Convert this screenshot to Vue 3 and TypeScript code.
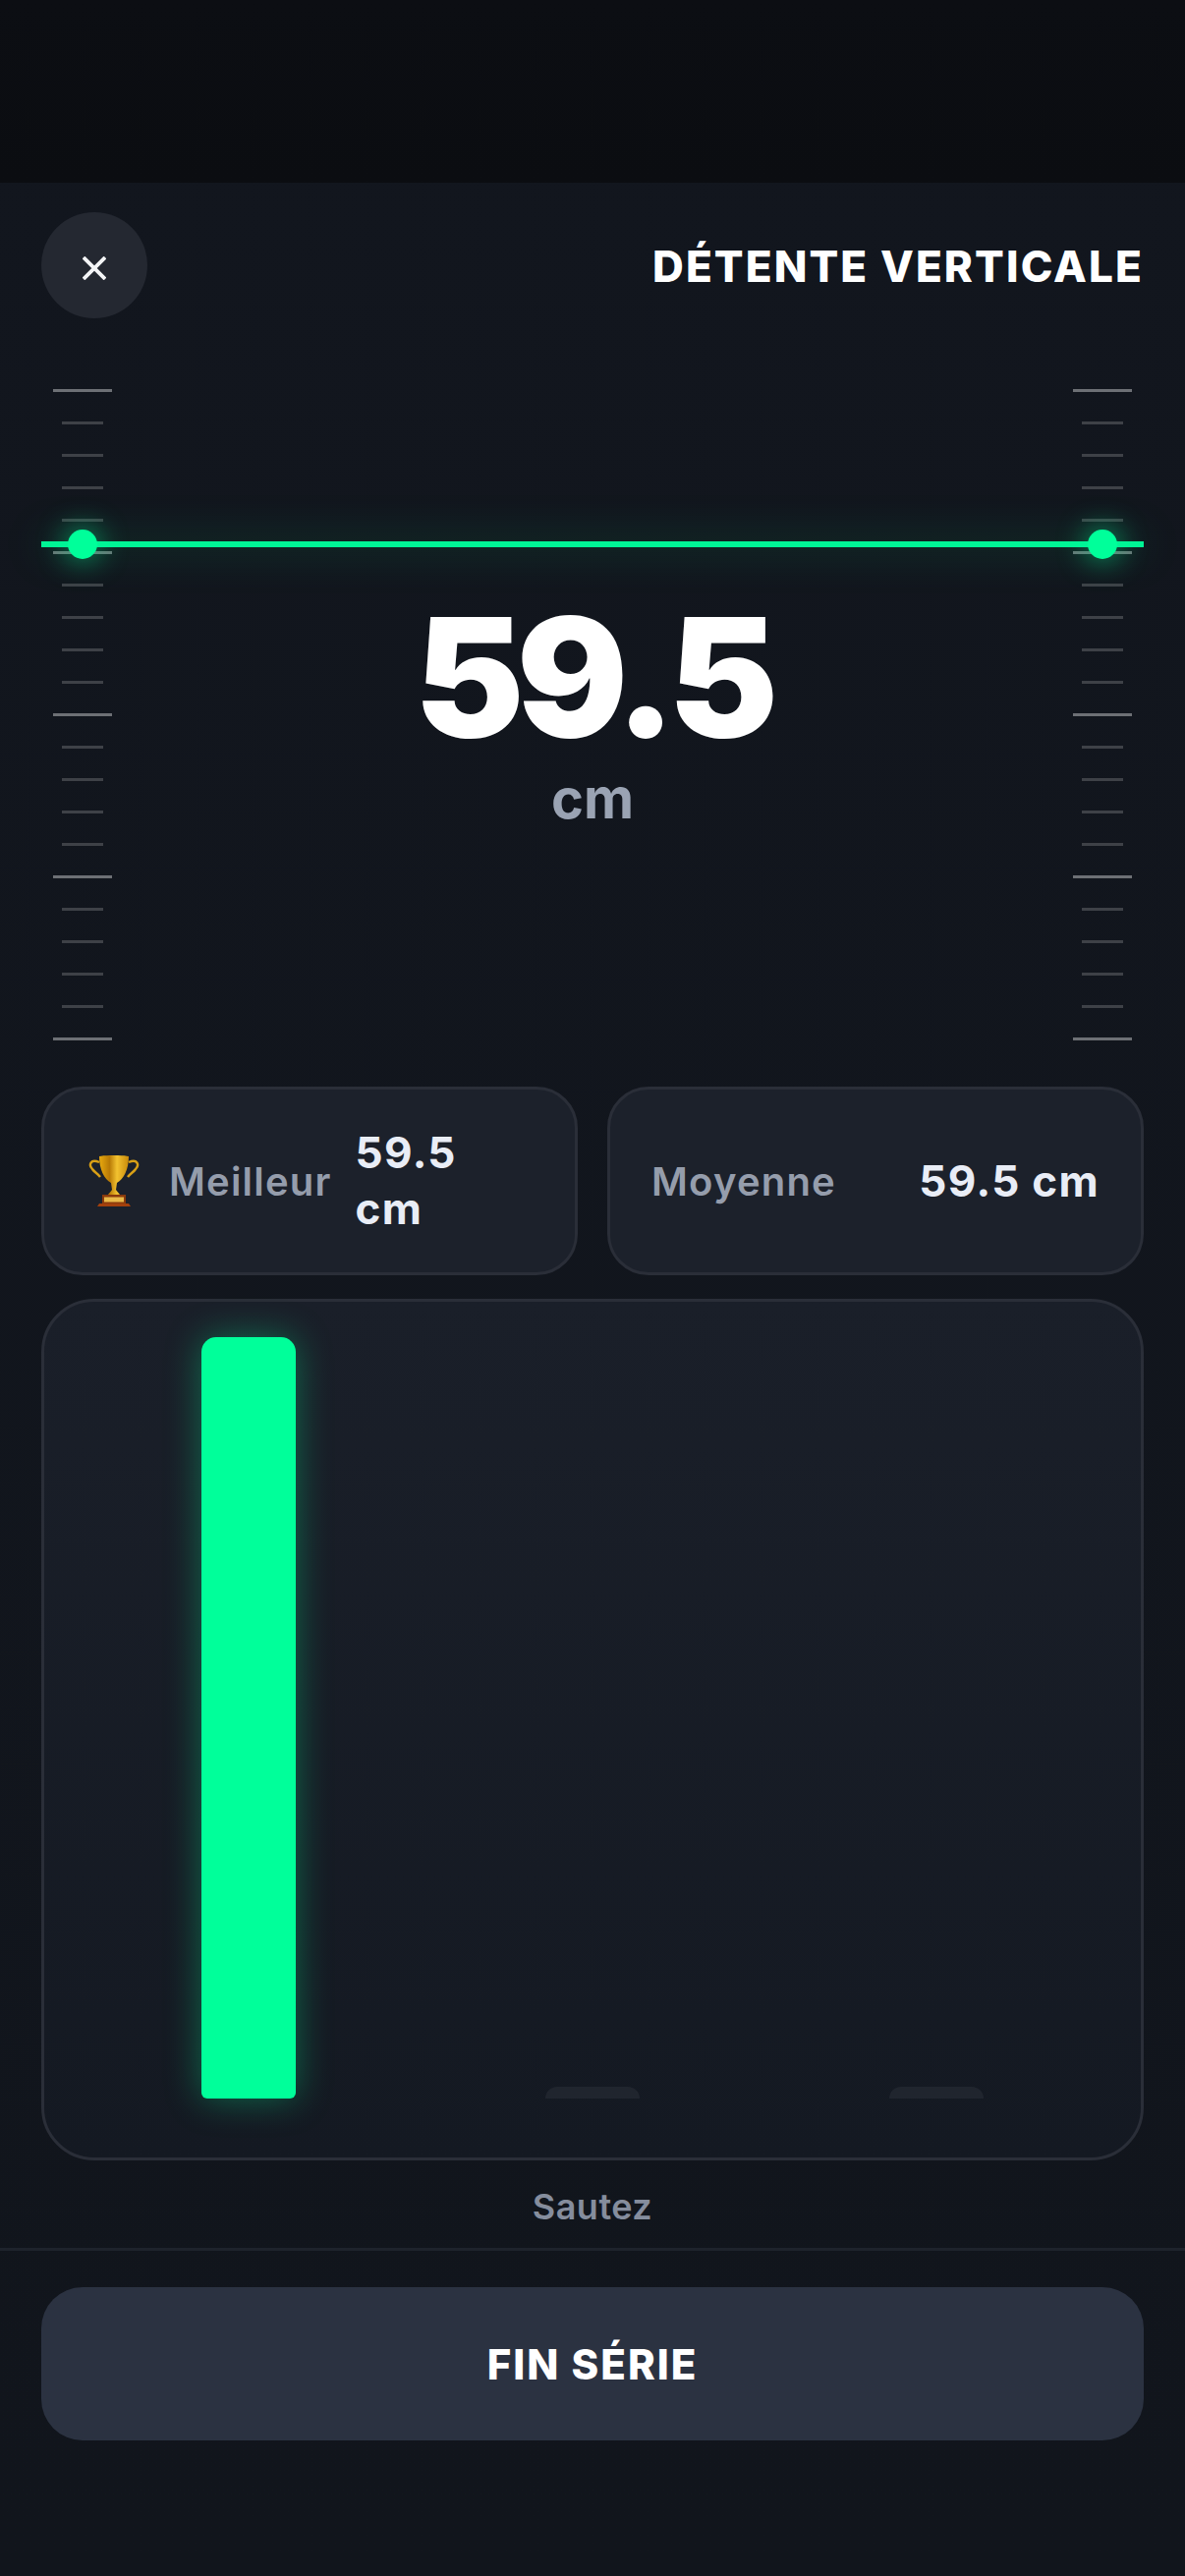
<template>
  <div class="screen">
    <div class="status-area"></div>

    <header class="top-bar">
      <button class="close-btn" aria-label="Fermer">
        <svg width="24" height="24" viewBox="0 0 24 24">
          <path d="M1 1 L23 23 M23 1 L1 23" stroke="#f4f5f7" stroke-width="3.8" fill="none" />
        </svg>
      </button>
      <h1 class="title">DÉTENTE VERTICALE</h1>
    </header>

    <section class="gauge">
      <div class="ticks">
        <span v-for="t in ticks" :key="t" class="tick" :class="{ major: t % 5 === 0 }"></span>
      </div>
      <div class="reading">
        <div class="reading-value">59.5</div>
        <div class="reading-unit">cm</div>
      </div>
      <div class="ticks">
        <span v-for="t in ticks" :key="t" class="tick" :class="{ major: t % 5 === 0 }"></span>
      </div>

      <div class="laser">
        <span class="dot"></span>
        <span class="dot"></span>
      </div>
    </section>

    <section class="stats">
      <div class="stat-card">
        <svg class="trophy" width="52" height="52" viewBox="0 0 52 52">
          <defs>
            <linearGradient id="gold" x1="0" y1="0" x2="1" y2="0">
              <stop offset="0" stop-color="#e8a90f" />
              <stop offset="0.35" stop-color="#b87a06" />
              <stop offset="0.6" stop-color="#f2c230" />
              <stop offset="1" stop-color="#c98a0a" />
            </linearGradient>
          </defs>
          <path d="M11 7 C2 3 0 10 4 14 C6 17 10 19 12 22" fill="none" stroke="#d9a016" stroke-width="2.4" />
          <path d="M41 7 C50 3 52 10 48 14 C46 17 42 19 40 22" fill="none" stroke="#d9a016" stroke-width="2.4" />
          <path d="M11 1 C16 -0.4 36 -0.4 41 1 C41 14 36 24 29 28 L28 35 C29 37 31 38 32 40 L20 40 C21 38 23 37 24 35 L23 28 C16 24 11 14 11 1 Z" fill="url(#gold)" />
          <rect x="14" y="40" width="24" height="9" fill="#8a3a0c" />
          <rect x="16" y="42.500" width="20" height="5" fill="#e9b949" />
          <path d="M11 49 H41 L43 52 H9 Z" fill="#a3400c" />
        </svg>
        <span class="stat-label">Meilleur</span>
        <span class="stat-value">59.5 cm</span>
      </div>
      <div class="stat-card spread">
        <span class="stat-label">Moyenne</span>
        <span class="stat-value">59.5 cm</span>
      </div>
    </section>

    <section class="chart">
      <div
        v-for="(bar, i) in bars"
        :key="i"
        class="bar"
        :class="{ active: bar.active }"
        :style="{ height: bar.height + 'px' }"
      ></div>
    </section>

    <p class="hint">Sautez</p>

    <footer class="footer">
      <button class="finish-btn">FIN SÉRIE</button>
    </footer>
  </div>
</template>

<script setup lang="ts">
const ticks: number[] = Array.from({ length: 21 }, (_, i) => i)

const bars = [
  { height: 775, active: true },
  { height: 12, active: false },
  { height: 12, active: false },
]
</script>

<style scoped>
.screen {
  width: 1206px;
  height: 2622px;
  display: flex;
  flex-direction: column;
  background: linear-gradient(180deg, #12161e 0%, #11151c 100%);
  font-family: Inter, "Liberation Sans", sans-serif;
  color: #fff;
  overflow: hidden;
}

.status-area {
  height: 186px;
  flex-shrink: 0;
  background: linear-gradient(180deg, #0c0e13, #0b0d11);
}

.top-bar {
  display: flex;
  justify-content: space-between;
  align-items: center;
  padding: 30px 42px 0;
}

.close-btn {
  width: 108px;
  height: 108px;
  border: none;
  border-radius: 50%;
  background: #242831;
  display: flex;
  align-items: center;
  justify-content: center;
  padding: 6px 0 0;
}

.title {
  margin: 2px 0 0;
  font-size: 44px;
  font-weight: 800;
  letter-spacing: 2.1px;
  line-height: 1;
}

.gauge {
  position: relative;
  display: flex;
  justify-content: space-between;
  margin: 72px 42px 0;
  padding: 0 12px;
}

.ticks {
  width: 60px;
  height: 663px;
  display: flex;
  flex-direction: column;
  justify-content: space-between;
  align-items: center;
}

.tick {
  display: block;
  width: 42px;
  height: 3px;
  background: #3e4147;
}

.tick.major {
  width: 60px;
  background: #6d7075;
}

.reading {
  padding-top: 204px;
  text-align: center;
}

.reading-value {
  font-size: 168px;
  font-weight: 900;
  line-height: 179px;
  letter-spacing: -8px;
}

.reading-unit {
  font-size: 56px;
  font-weight: 700;
  line-height: 68px;
  color: #9aa3b3;
}

.laser {
  position: absolute;
  left: 0;
  right: 0;
  top: 155px;
  height: 6px;
  background: #00f596;
  box-shadow: 0 0 44px rgba(0, 255, 154, 0.4);
  display: flex;
  justify-content: space-between;
  align-items: center;
  padding: 0 27px;
}

.dot {
  width: 30px;
  height: 30px;
  border-radius: 50%;
  background: #00ff9a;
  box-shadow: 0 0 30px rgba(0, 255, 154, 0.7);
}

.stats {
  display: grid;
  grid-template-columns: 1fr 1fr;
  gap: 30px;
  margin: 47px 42px 0;
}

.stat-card {
  height: 192px;
  box-sizing: border-box;
  display: flex;
  align-items: center;
  gap: 24px;
  padding: 0 48px 0 45px;
  background: #1c212b;
  border: 3px solid #2a2e38;
  border-radius: 42px;
}

.stat-card.spread {
  justify-content: space-between;
  padding: 0 42px;
}

.trophy {
  flex-shrink: 0;
  margin-right: 6px;
}

.stat-label {
  flex-shrink: 0;
  font-size: 40px;
  font-weight: 600;
  letter-spacing: 1.2px;
  color: #959dac;
}

.stat-value {
  font-size: 44px;
  font-weight: 700;
  line-height: 57px;
  letter-spacing: 1.32px;
  color: #e9edf6;
}

.chart {
  height: 877px;
  flex-shrink: 0;
  box-sizing: border-box;
  margin: 24px 42px 0;
  padding: 0 33px 60px;
  display: flex;
  justify-content: space-around;
  align-items: flex-end;
  background: linear-gradient(180deg, #1a1f29 0%, #141922 100%);
  border: 3px solid #2a2e38;
  border-radius: 54px;
}

.bar {
  width: 96px;
  border-radius: 12px 12px 0 0;
  background: #20252e;
}

.bar.active {
  border-radius: 15px 15px 6px 6px;
  background: #00ff9a;
  box-shadow: 0 0 36px rgba(0, 255, 154, 0.35);
}

.hint {
  margin: 25px 0 0;
  text-align: center;
  font-size: 36px;
  font-weight: 600;
  line-height: 44px;
  letter-spacing: 0.5px;
  color: #858d9d;
}

.footer {
  margin-top: 20px;
  padding: 37px 42px 0;
  border-top: 3px solid #1e232c;
}

.finish-btn {
  width: 100%;
  height: 156px;
  border: none;
  border-radius: 42px;
  background: #2b3241;
  color: #fff;
  font-family: inherit;
  font-size: 42px;
  font-weight: 800;
  letter-spacing: 2px;
}
</style>
